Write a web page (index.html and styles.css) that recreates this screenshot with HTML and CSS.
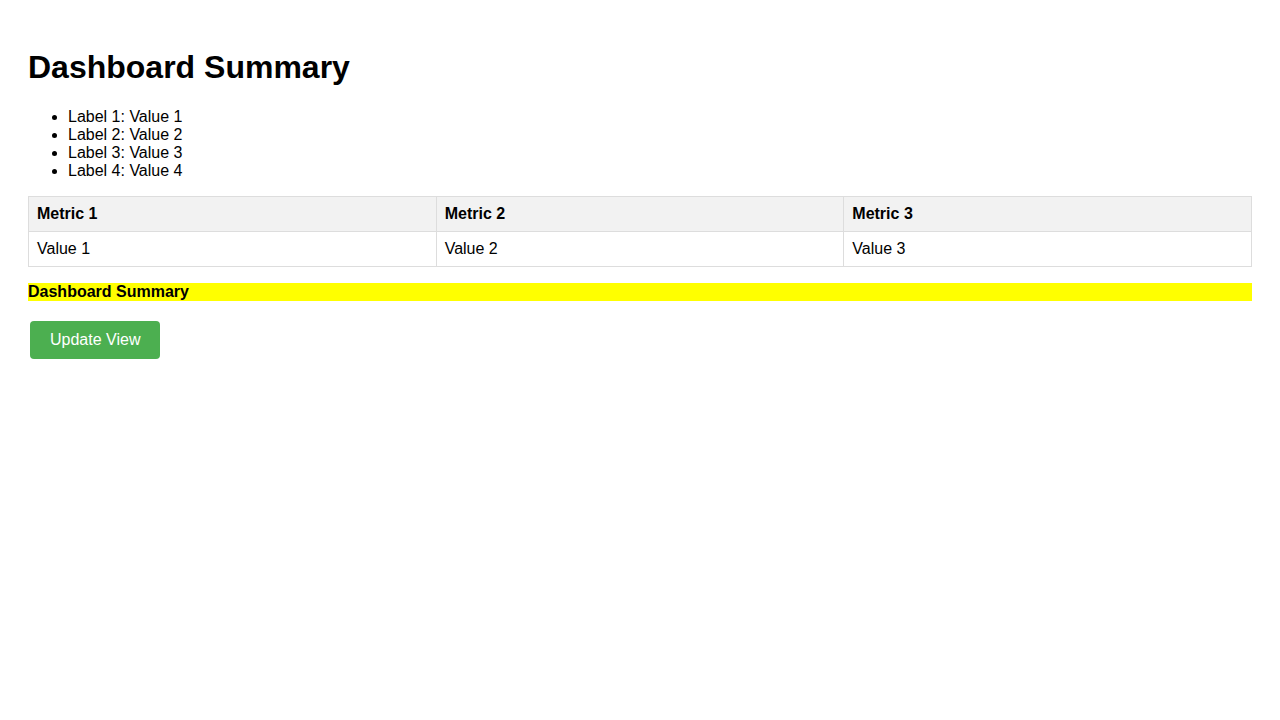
FILE: index.html
```html
<!DOCTYPE html>
<html lang="en">
<head>
<meta charset="utf-8">
<title>Dashboard Summary</title>
<link rel="stylesheet" href="styles.css">
</head>
<body>
<div class="page">
  <h1 class="title">Dashboard Summary</h1>
  <ul class="labels">
    <li>Label 1: Value 1</li>
    <li>Label 2: Value 2</li>
    <li>Label 3: Value 3</li>
    <li>Label 4: Value 4</li>
  </ul>
  <table class="metrics">
    <thead>
      <tr><th>Metric 1</th><th>Metric 2</th><th>Metric 3</th></tr>
    </thead>
    <tbody>
      <tr><td>Value 1</td><td>Value 2</td><td>Value 3</td></tr>
    </tbody>
  </table>
  <div class="highlight">Dashboard Summary</div>
  <button class="update-btn" type="button">Update View</button>
</div>
</body>
</html>
```

FILE: styles.css
```css
html, body {
  margin: 0;
  padding: 0;
  background: #ffffff;
}

body {
  font-family: "Liberation Sans", Arial, sans-serif;
  font-size: 16px;
  color: #000;
}

.page {
  padding: 28px;
}

.title {
  font-size: 32px;
  font-weight: bold;
  margin: 21px 0 22px;
  line-height: 37px;
}

.labels {
  margin: 0 0 16px;
  padding-left: 40px;
  line-height: 18px;
}

.metrics {
  width: 100%;
  border-collapse: collapse;
  table-layout: fixed;
  margin-bottom: 16px;
}

.metrics th,
.metrics td {
  border: 1px solid #dddddd;
  padding: 8px;
  text-align: left;
  line-height: 18px;
}

.metrics th {
  background: #f2f2f2;
  font-weight: bold;
}

.highlight {
  background: #ffff00;
  font-weight: bold;
  line-height: 18px;
  margin-bottom: 18px;
}

.update-btn {
  display: inline-block;
  margin: 2px;
  background: #4caf50;
  color: #ffffff;
  border: none;
  border-radius: 4px;
  padding: 10px 20px;
  font-family: "Liberation Sans", Arial, sans-serif;
  font-size: 16px;
  line-height: 18px;
  cursor: pointer;
}
```
